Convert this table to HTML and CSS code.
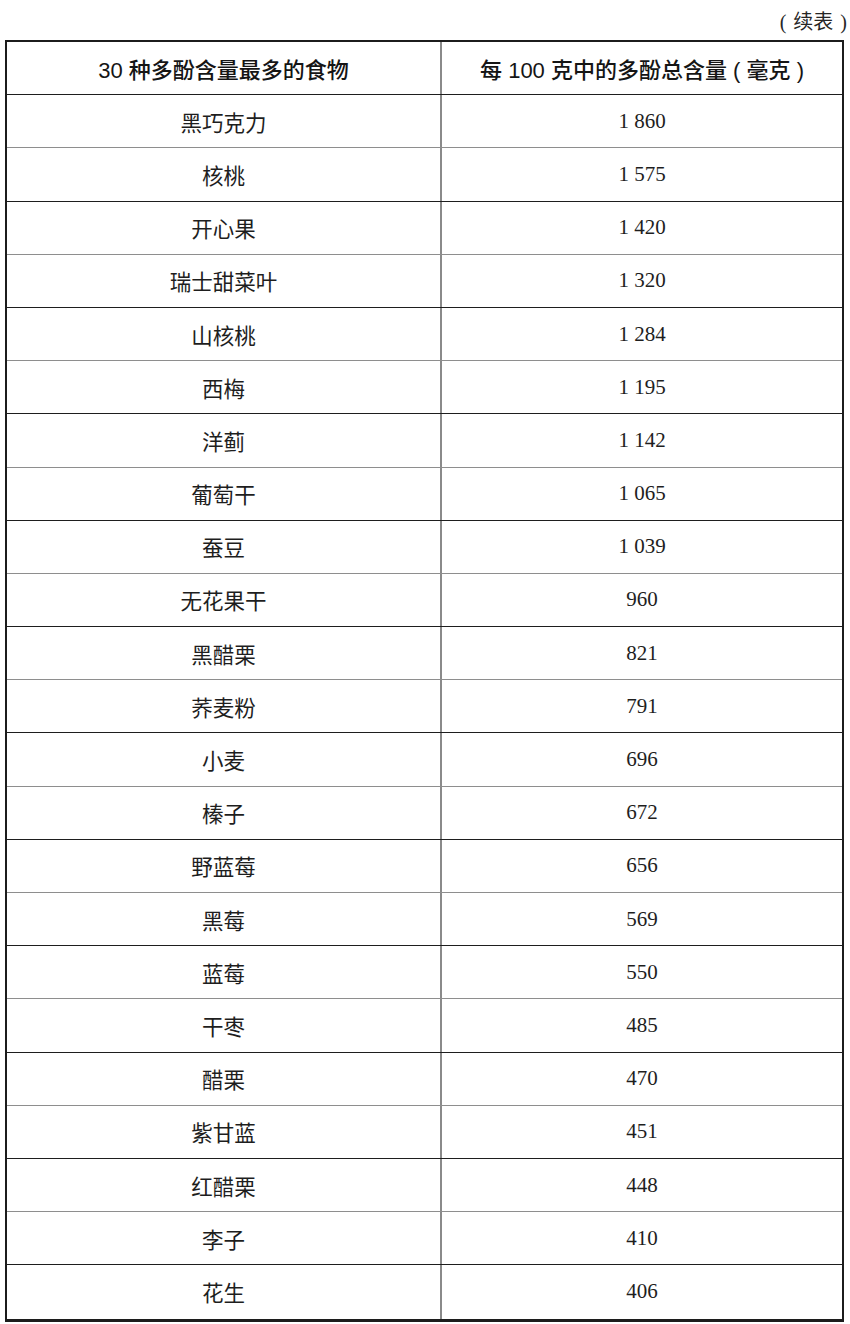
FILE: index.html
```html
<!DOCTYPE html>
<html lang="zh-CN">
<head>
<meta charset="utf-8">
<title>多酚含量表（续表）</title>
<link rel="stylesheet" href="styles.css">
</head>
<body>
<div class="page">
  <div class="caption">( 续表 )</div>
  <div class="table">
    <div class="row head">
      <div class="cell left">30 种多酚含量最多的食物</div>
      <div class="cell right">每 100 克中的多酚总含量 ( 毫克 )</div>
    </div>
    <div class="row"><div class="cell left">黑巧克力</div><div class="cell right">1 860</div></div>
    <div class="row"><div class="cell left">核桃</div><div class="cell right">1 575</div></div>
    <div class="row"><div class="cell left">开心果</div><div class="cell right">1 420</div></div>
    <div class="row"><div class="cell left">瑞士甜菜叶</div><div class="cell right">1 320</div></div>
    <div class="row"><div class="cell left">山核桃</div><div class="cell right">1 284</div></div>
    <div class="row"><div class="cell left">西梅</div><div class="cell right">1 195</div></div>
    <div class="row"><div class="cell left">洋蓟</div><div class="cell right">1 142</div></div>
    <div class="row"><div class="cell left">葡萄干</div><div class="cell right">1 065</div></div>
    <div class="row"><div class="cell left">蚕豆</div><div class="cell right">1 039</div></div>
    <div class="row"><div class="cell left">无花果干</div><div class="cell right">960</div></div>
    <div class="row"><div class="cell left">黑醋栗</div><div class="cell right">821</div></div>
    <div class="row"><div class="cell left">荞麦粉</div><div class="cell right">791</div></div>
    <div class="row"><div class="cell left">小麦</div><div class="cell right">696</div></div>
    <div class="row"><div class="cell left">榛子</div><div class="cell right">672</div></div>
    <div class="row"><div class="cell left">野蓝莓</div><div class="cell right">656</div></div>
    <div class="row"><div class="cell left">黑莓</div><div class="cell right">569</div></div>
    <div class="row"><div class="cell left">蓝莓</div><div class="cell right">550</div></div>
    <div class="row"><div class="cell left">干枣</div><div class="cell right">485</div></div>
    <div class="row"><div class="cell left">醋栗</div><div class="cell right">470</div></div>
    <div class="row"><div class="cell left">紫甘蓝</div><div class="cell right">451</div></div>
    <div class="row"><div class="cell left">红醋栗</div><div class="cell right">448</div></div>
    <div class="row"><div class="cell left">李子</div><div class="cell right">410</div></div>
    <div class="row"><div class="cell left">花生</div><div class="cell right">406</div></div>
  </div>
</div>
</body>
</html>
```

FILE: styles.css
```css
html, body {
  margin: 0;
  padding: 0;
  background: #ffffff;
}

.page {
  width: 850px;
  font-family: "Liberation Serif", "Noto Sans CJK SC", serif;
  color: #1e1e1e;
}

.caption {
  height: 40px;
  display: flex;
  align-items: center;
  justify-content: flex-end;
  padding-right: 3px;
  font-size: 20px;
  word-spacing: 2px;
  color: #262626;
  font-family: "Liberation Serif", "Noto Sans CJK SC", serif;
}

.table {
  margin-left: 5px;
  width: 839px;
  box-sizing: border-box;
  border: 2px solid #1c1c1c;
  border-bottom-width: 3px;
}

.row {
  display: flex;
  height: 53.2px;
  box-sizing: border-box;
  border-bottom: 1px solid #1e1e1e;
}

.row:nth-child(even) {
  border-bottom-color: #8e8e8e;
}

.row:last-child {
  border-bottom: none;
}

.cell {
  display: flex;
  align-items: center;
  justify-content: center;
  font-size: 21px;
}

.left {
  width: 433px;
  border-right: 2px solid #8a8a8a;
  font-family: "Noto Sans CJK SC", sans-serif;
  font-size: 21.5px;
  font-weight: 400;
}

.right {
  flex: 1;
}

.head .cell {
  font-family: "Liberation Sans", "Noto Sans CJK SC", sans-serif;
  font-weight: 500;
  font-size: 22px;
  color: #151515;
}
```
